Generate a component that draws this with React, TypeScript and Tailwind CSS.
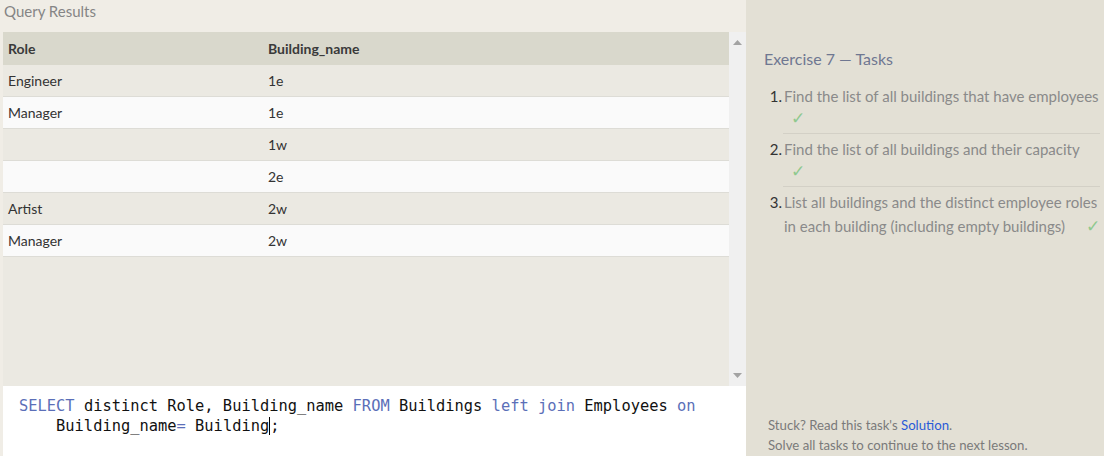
import React from "react";

const rows = [
  ["Engineer", "1e"],
  ["Manager", "1e"],
  ["", "1w"],
  ["", "2e"],
  ["Artist", "2w"],
  ["Manager", "2w"],
];

const tasks = [
  { n: "1.", lines: ["Find the list of all buildings that have employees"], checkInline: false },
  { n: "2.", lines: ["Find the list of all buildings and their capacity"], checkInline: false },
  { n: "3.", lines: ["List all buildings and the distinct employee roles", "in each building (including empty buildings)"], checkInline: true },
];

export default function App() {
  const font = { fontFamily: "Lato, 'Open Sans', sans-serif" };
  return (
    <div className="w-[1104px] h-[456px] flex overflow-hidden bg-[#f0ede6]" style={font}>
      {/* Left */}
      <div className="w-[746px] flex flex-col">
        <div className="h-[32px] pl-[4px] pt-[1px] text-[15px] text-[#858585] leading-[20px]">Query Results</div>
        <div className="flex h-[354px] pl-[3px] bg-[#f0ede6]">
          <div className="flex-1 bg-[#ebe9e2] flex flex-col">
            <div className="h-[33px] bg-[#d9d8cc] flex items-center text-[14px] font-bold text-[#3a3a3a]">
              <div className="w-[262px] pl-[5px]">Role</div>
              <div className="pl-[3px]">Building_name</div>
            </div>
            {rows.map((r, i) => (
              <div
                key={i}
                className={
                  "h-[32px] flex items-center text-[14px] text-[#333] border-b border-[#dddcd6] " +
                  (i % 2 === 0 ? "bg-[#ebe9e2]" : "bg-[#fafafa]")
                }
              >
                <div className="w-[262px] pl-[5px]">{r[0]}</div>
                <div className="pl-[3px]">{r[1]}</div>
              </div>
            ))}
          </div>
          <div className="w-[17px] bg-[#f0f0f0] flex flex-col items-center justify-between py-[8px]">
            <svg width="9" height="5" viewBox="0 0 9 5"><path d="M0 5 L4.5 0 L9 5 Z" fill="#a3a3a3" /></svg>
            <svg width="9" height="5" viewBox="0 0 9 5"><path d="M0 0 L4.5 5 L9 0 Z" fill="#a3a3a3" /></svg>
          </div>
        </div>
        <div className="flex-1 ml-[3px] bg-white pt-[10px] pl-[16px] text-[15.4px] leading-[20px] text-[#111]" style={{ fontFamily: "'DejaVu Sans Mono', 'Liberation Mono', monospace" }}>
          <div className="whitespace-pre">
            <span className="text-[#5b6fb8]">SELECT</span> distinct Role, Building_name <span className="text-[#5b6fb8]">FROM</span> Buildings <span className="text-[#5b6fb8]">left</span> <span className="text-[#5b6fb8]">join</span> Employees <span className="text-[#5b6fb8]">on</span>
          </div>
          <div className="whitespace-pre">
            {"    Building_name"}<span className="text-[#5b6fb8]">=</span> Building<span className="border-l border-black">;</span>
          </div>
        </div>
      </div>
      {/* Right */}
      <div className="flex-1 bg-[#e3e0d5] flex flex-col pl-[18px] pr-[4px]">
        <div className="mt-[47px] text-[16px] leading-[24px] text-[#6f7791]">Exercise 7 — Tasks</div>
        <div className="mt-[13px] flex flex-col">
          {tasks.map((t, i) => (
            <div key={i} className={"flex text-[15px] leading-[24px] " + (i > 0 ? "pt-[3px]" : "")}>
              <div className="w-[19px] text-right text-[#333] pr-[1px]">{t.n}</div>
              <div className={"flex-1 pl-[1px] text-[#8a8a8a] " + (i < 2 ? "border-b border-[#d3d0c6] pb-[5px]" : "")}>
                {t.checkInline ? (
                  <>
                    <div>{t.lines[0]}</div>
                    <div>
                      {t.lines[1]}
                      <span className="ml-[21px] text-[17px] text-[#8fc98f]">✓</span>
                    </div>
                  </>
                ) : (
                  <>
                    <div className="whitespace-nowrap">{t.lines[0]}</div>
                    <div className="pl-[7px] text-[17px] leading-[20px] text-[#8fc98f]">✓</div>
                  </>
                )}
              </div>
            </div>
          ))}
        </div>
        <div className="mt-auto mb-[1px] pl-[4px] text-[13.2px] leading-[20px] text-[#7a7a7a]">
          <div>
            Stuck? Read this task's <span className="text-[#2a5bd7]">Solution</span>.
          </div>
          <div>Solve all tasks to continue to the next lesson.</div>
        </div>
      </div>
    </div>
  );
}
